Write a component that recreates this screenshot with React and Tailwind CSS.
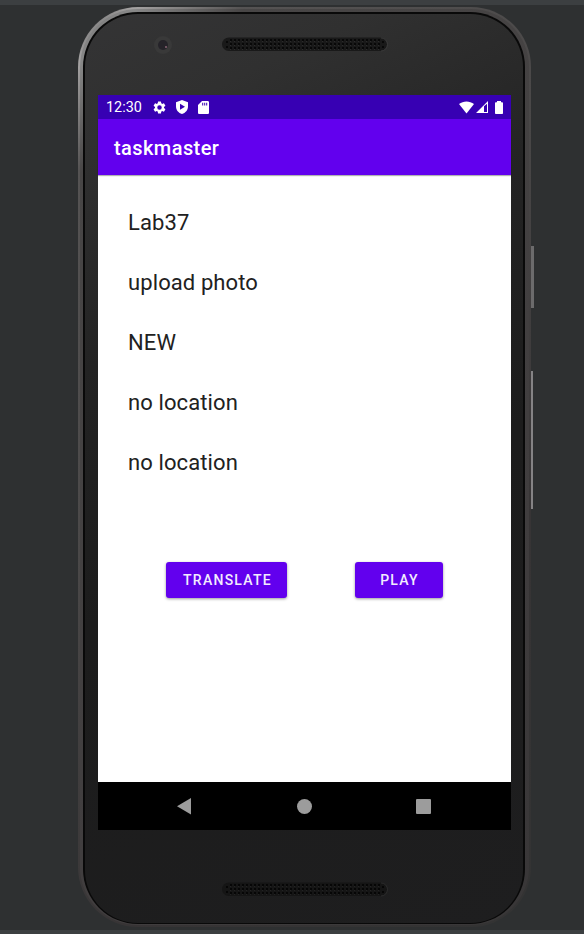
import React from 'react';

const DETAILS = ['Lab37', 'upload photo', 'NEW', 'no location', 'no location'];
const COLUMNS = Array.from({ length: 38 }, (_, i) => 8 + i * 4);
const ROWS = [3, 7, 11];

function Speaker({ fill, dot, edge, className }) {
  return (
    <svg width="166" height="15" viewBox="0 0 166 15" className={className} shapeRendering="crispEdges">
      <rect x="0" y="0.5" width="165" height="13.6" rx="6.8" fill={fill} shapeRendering="auto" />
      <path d="M159 1a6.500 6.500 0 0 1 0 13" fill="none" stroke={edge} strokeWidth="0.8" shapeRendering="auto" />
      {ROWS.map((y) =>
        COLUMNS.map((x) => (
          <g key={`${x}-${y}`}>
            <rect x={x} y={y - 1} width="2" height="2" fill={dot} />
            <rect x={x} y={y + 1} width="1" height="1" fill={edge} opacity="0.55" />
          </g>
        ))
      )}
      <g fill={dot}>
        <rect x="4" y="4" width="2" height="2" />
        <rect x="4" y="9" width="2" height="2" />
        <rect x="160" y="4" width="2" height="2" />
        <rect x="160" y="9" width="2" height="2" />
      </g>
    </svg>
  );
}

function StatusBar() {
  return (
    <div className="flex h-6 shrink-0 items-center bg-[#3700b3] pl-2 pr-[8px] text-white">
      <span className="w-[37px] pt-[2px] text-[14.4px] leading-[22px] whitespace-nowrap">12:30</span>
      <svg width="15" height="15" viewBox="0 0 24 24" className="ml-[9px]" fill="currentColor">
        <path d="M19.14 12.94c.04-.3.06-.61.06-.94 0-.32-.02-.64-.07-.94l2.03-1.58a.49.49 0 0 0 .12-.61l-1.92-3.32a.488.488 0 0 0-.59-.22l-2.39.96c-.5-.38-1.03-.7-1.62-.94l-.36-2.54a.484.484 0 0 0-.48-.41h-3.84c-.24 0-.43.17-.47.41l-.36 2.54c-.59.24-1.13.57-1.62.94l-2.39-.96c-.22-.08-.47 0-.59.22L2.74 8.87c-.12.21-.08.47.12.61l2.03 1.58c-.05.3-.09.63-.09.94s.02.64.07.94l-2.03 1.58a.49.49 0 0 0-.12.61l1.92 3.32c.12.22.37.29.59.22l2.39-.96c.5.38 1.03.7 1.62.94l.36 2.54c.05.24.24.41.48.41h3.84c.24 0 .44-.17.47-.41l.36-2.54c.59-.24 1.13-.56 1.62-.94l2.39.96c.22.08.47 0 .59-.22l1.92-3.32c.12-.22.07-.47-.12-.61l-2.01-1.58zM12 15.6A3.6 3.6 0 1 1 12 8.4a3.6 3.6 0 0 1 0 7.2z" />
      </svg>
      <svg width="12" height="14" viewBox="0 0 12 14" className="ml-[9px]" fill="currentColor">
        <path fillRule="evenodd" d="M6 0 0 2.3v4.2C0 10 2.5 13 6 14c3.500-1 6-4 6-7.500V2.300zM4 3.700v6L9 6.700z" />
      </svg>
      <svg width="11" height="13" viewBox="0 0 11 13" className="ml-[10px]" fill="currentColor">
        <path fillRule="evenodd" d="M4 0h5.700C10.400 0 11 .6 11 1.300v10.400c0 .7-.6 1.300-1.300 1.300H1.300C.6 13 0 12.400 0 11.700V4zM4.200 1.800v2.700h1V1.800zM6.200 1.800v2.700h1V1.800zM8.200 1.800v2.700h1V1.800z" />
      </svg>
      <svg width="15" height="13" viewBox="0 0 15 13" className="ml-auto" fill="currentColor">
        <path d="M0 3C4.300-.5 10.700-.5 15 3L7.500 12.600z" />
      </svg>
      <svg width="12" height="12" viewBox="0 0 12 12" className="ml-[2px]" fill="currentColor">
        <path fillRule="evenodd" d="M12 0v12H0zM8 5.200v5.800h3V2.700z" />
      </svg>
      <svg width="8" height="13" viewBox="0 0 8 13" className="ml-[7px]" fill="currentColor">
        <path d="M2 0h4v1.300h1.200c.5 0 .8.400.8.900v10c0 .5-.3.800-.8.800H.8c-.5 0-.8-.3-.8-.8v-10c0-.5.300-.9.800-.9H2z" />
      </svg>
    </div>
  );
}

function ActionButton({ children, className }) {
  return (
    <button className={`h-[36px] rounded-[3px] bg-[#6200ee] pt-px text-[14px] font-medium leading-[35px] tracking-[1.25px] text-[#f3ebfe] shadow-[0_1px_3px_rgba(0,0,0,0.4)] ${className}`}>
      {children}
    </button>
  );
}

function Screen() {
  return (
    <div className="flex h-[735px] w-[413px] flex-col bg-white">
      <StatusBar />
      <header className="z-10 flex h-14 shrink-0 items-center bg-[#6200ee] pl-4 text-[20px] font-medium tracking-[0.42px] text-white shadow-[0_1px_1px_rgba(0,0,0,0.3)]">
        <span className="pt-px">taskmaster</span>
      </header>
      <main className="flex grow flex-col">
        <ul className="pl-[30px] pt-[18px] text-[22px] tracking-[0.1px] text-[#212121]">
          {DETAILS.map((text, i) => (
            <li key={i} className="h-[60px] leading-[60px]">{text}</li>
          ))}
        </ul>
        <div className="flex pl-[68px] pt-[69px]">
          <ActionButton className="w-[121px] pl-[2px]">TRANSLATE</ActionButton>
          <ActionButton className="ml-[68px] w-[88px] pl-px">PLAY</ActionButton>
        </div>
      </main>
      <nav className="flex h-12 shrink-0 items-center bg-black pl-[79px]">
        <svg width="14" height="17" viewBox="0 0 14 17"><path d="M14 0v16.500L0 8.200z" fill="#9c9c9c" /></svg>
        <span className="ml-[106px] size-[15px] rounded-full bg-[#9c9c9c]" />
        <span className="ml-[104px] size-[15px] rounded-[1px] bg-[#9c9c9c]" />
      </nav>
    </div>
  );
}

function Phone() {
  return (
    <div className="h-[920px] w-[453px] rounded-[60px] bg-[linear-gradient(135deg,#555_0%,#a5a3a3_4%,#555353_12%,#4a4848_40%,#373435_70%,#333_100%)] p-[2px]">
      <div className="h-full rounded-[58px] bg-[linear-gradient(135deg,#777_0%,#888_4%,#484646_12%,#403d3e_70%,#383637_100%)] pb-px pl-[3px] pr-1 pt-[3px]">
        <div className="h-full rounded-[55px] bg-[#090909] px-[2px] pb-px pt-[2px]">
          <div className="flex h-full flex-col rounded-[53px] bg-[linear-gradient(155deg,#343435_0%,#303030_12%,#232323_32%,#1c1c1c_55%,#1e1e1f_100%)] pl-[13px]">
            <div className="flex h-[81px] shrink-0 pl-[56px] pt-[21px]">
              <span className="mt-px flex size-[18px] items-center justify-center rounded-full bg-[#393939]">
                <span className="flex size-[10px] items-center justify-center rounded-full bg-[#252329]">
                  <span className="ml-[5px] mt-[4px] size-[2px] rounded-full bg-[#8a6575]" />
                </span>
              </span>
              <Speaker fill="#191919" dot="#080808" edge="#3d3d3d" className="ml-[50px] mt-[2px]" />
            </div>
            <Screen />
            <Speaker fill="#151515" dot="#060606" edge="#303030" className="ml-[124px] mt-[52px]" />
          </div>
        </div>
      </div>
    </div>
  );
}

export default function App() {
  return (
    <div className="flex h-[934px] w-[584px] flex-col overflow-hidden bg-[#2e3031] font-[Roboto,sans-serif]">
      <div className="h-[5px] shrink-0 bg-[#3c3f41]" />
      <div className="flex h-[925px] shrink-0 pl-[78px] pt-[2px]">
        <Phone />
        <div className="flex flex-col items-start pt-[239px]">
          <span className="h-[62px] w-[3px] bg-[#6c6b6c]" />
          <span className="mt-[63px] h-[138px] w-[2px] bg-[#858385]" />
        </div>
      </div>
      <div className="h-1 shrink-0 bg-[#3c3f41]" />
    </div>
  );
}
